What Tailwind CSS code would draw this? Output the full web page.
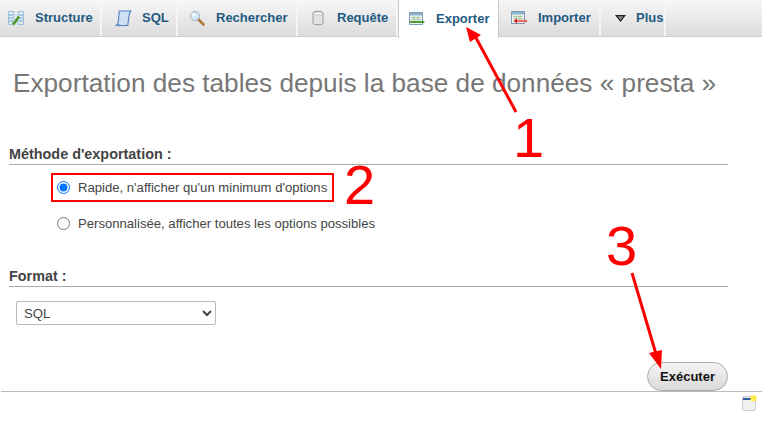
<!DOCTYPE html>
<html lang="fr">
<head>
  <meta charset="UTF-8" />
  <title>Exporter</title>
  <script src="https://cdn.jsdelivr.net/npm/@tailwindcss/browser@4"></script>
</head>
<body class="relative w-[762px] h-[422px] overflow-hidden bg-white text-[#444] font-['Liberation_Sans',Arial,sans-serif]">
  <!-- Tabs -->
  <nav class="flex h-[37px] bg-gradient-to-b from-[#f7f7f7] to-[#dcdcdc] border-b border-[#d0d0d0] text-[13px] font-bold text-[#235a81]">
    <a class="flex items-center w-[102px] pl-[8px] border-r-2 border-[#f5f5f5]">
      <svg class="w-4 h-4 mr-[11px]" viewBox="0 0 16 16"><path d="M.5 1.500h5.500v13H.500zM10 1.500h5.500v13H10z" fill="#dcebf5" stroke="#8fb4cf" stroke-width=".8"/><path d="M1 5h4M1 8h4M1 11h4M11 5h4M11 8h4M11 11h4" stroke="#7aa6c4"/><path d="M4.500 12.500l1.500 1 5-7" fill="none" stroke="#4f9a2c" stroke-width="2.600"/></svg>
      <span>Structure</span>
    </a>
    <a class="flex items-center w-[76px] pl-[13px] border-r-2 border-[#f5f5f5]">
      <svg class="w-[17px] h-[17px] mr-[10px]" viewBox="0 0 16 16"><path d="M4 1h11l-1.500 2.500L12 14.500H1L3 12z" fill="#cfe0f3" stroke="#4f7fc0"/><path d="M1 14.500c1.500-1 3-1 4-.5l-.2 1.200z" fill="#8fb2de" stroke="#4f7fc0" stroke-width=".6"/></svg>
      <span>SQL</span>
    </a>
    <a class="flex items-center w-[120px] pl-[11px] border-r-2 border-[#f5f5f5]">
      <svg class="w-4 h-4 mr-[11px]" viewBox="0 0 16 16"><path d="M9.500 9.500l5 5" stroke="#b5763a" stroke-width="2.600" stroke-linecap="round"/><circle cx="6" cy="6" r="4.600" fill="#d3e6f6" stroke="#9db4c6"/><circle cx="5" cy="5" r="1.600" fill="#fff"/></svg>
      <span>Rechercher</span>
    </a>
    <a class="flex items-center w-[100px] pl-[12px] border-r-2 border-[#f5f5f5]">
      <svg class="w-4 h-4 mr-[11px]" viewBox="0 0 16 16"><path d="M3 3c0-2.400 10-2.400 10 0v10c0 2.400-10 2.400-10 0z" fill="#e2e2e2" stroke="#999"/><ellipse cx="8" cy="3.500" rx="4.500" ry="1.500" fill="#f8f8f8" stroke="#aaa" stroke-width=".6"/></svg>
      <span>Requête</span>
    </a>
    <a class="flex items-center w-[101px] h-[38px] pl-[10px] bg-white border-l border-[#c8c8c8] border-r border-r-[#c8c8c8]">
      <svg class="w-4 h-4 mr-[11px] shrink-0" viewBox="0 0 16 16"><path d="M.5 1.500h13v12H.500z" fill="#eef4f8" stroke="#7d9cb4"/><path d="M1 2h12v2.500H1z" fill="#8fb4cf"/><path d="M2 6.500h10M2 8.500h10M5 5v6M9 5v6" stroke="#9fc08a" stroke-width=".8"/><path d="M1 11h12" stroke="#4e9a33" stroke-width="2"/><path d="M13 9l3 2-3 2z" fill="#4e9a33"/></svg>
      <span>Exporter</span>
    </a>
    <a class="flex items-center w-[102px] pl-[12px] border-r-2 border-[#f5f5f5]">
      <svg class="w-4 h-4 mr-[11px] shrink-0" viewBox="0 0 16 16"><path d="M.5 1.500h13v12H.500z" fill="#eef4f8" stroke="#7d9cb4"/><path d="M1 2h12v2.500H1z" fill="#8fb4cf"/><path d="M2 6.500h10M2 8.500h10M5 5v6M9 5v6" stroke="#9fc08a" stroke-width=".8"/><path d="M6 11h10" stroke="#f06a6a" stroke-width="2.200"/><path d="M6 8.500l-3.500 2.500 3.500 2.500z" fill="#d91c1c"/></svg>
      <span>Importer</span>
    </a>
    <a class="flex items-center w-[65px] pl-[14px] border-r-2 border-[#f5f5f5]">
      <svg class="w-[11px] h-[7px] mr-[10px]" viewBox="0 0 11 7"><path d="M0 0h11L5.500 7z" fill="#222"/><path d="M2.500 1.200h6L5.500 5z" fill="#888"/></svg>
      <span>Plus</span>
    </a>
  </nav>

  <main class="px-[9px]">
    <h2 class="mt-[31px] pl-[4px] text-[26.2px] leading-[30px] font-normal text-[#777] whitespace-nowrap">Exportation des tables depuis la base de données « presta »</h2>

    <h3 class="mt-[48px] text-[14.4px] leading-[17px] font-bold border-b border-[#aaa] pb-[1px] w-[719px]">Méthode d'exportation :</h3>
    <div class="mt-[8px] ml-[42px] w-[283px] h-[29px] border-2 border-[#f00] flex items-center pl-[4px] text-[13.12px] text-[#444]">
      <input type="radio" name="m" checked class="w-[13px] h-[13px] mr-[8px] accent-[#0075ff]" />
      <span>Rapide, n'afficher qu'un minimum d'options</span>
    </div>
    <div class="mt-[7px] ml-[48px] h-[29px] flex items-center text-[13.12px] text-[#444]">
      <input type="radio" name="m" class="w-[13px] h-[13px] mr-[8px]" />
      <span>Personnalisée, afficher toutes les options possibles</span>
    </div>

    <h3 class="mt-[30px] text-[14.4px] leading-[17px] font-bold border-b border-[#aaa] pb-[1px] w-[719px]">Format :</h3>
    <select class="block mt-[14px] ml-[7px] w-[200px] h-[24px] pl-[3px] bg-white border border-[#bbb] rounded-[2px] text-[13.12px] text-[#444]">
      <option>SQL</option>
    </select>

    <div class="flex justify-end w-[719px] mt-[37px]">
      <button class="w-[81px] h-[29px] rounded-full border border-[#aaa] bg-gradient-to-b from-[#f4f4f4] to-[#dadada] text-[13px] font-bold text-[#111]">Exécuter</button>
    </div>
  </main>
  <div class="absolute left-[1px] right-0 top-[391px] border-t border-[#bbb]"></div>

  <!-- Console icon -->
  <svg class="absolute left-[742px] top-[395px] w-[15px] h-[16px]" viewBox="0 0 15 16"><rect x=".5" y="1.500" width="13" height="14" rx="1.500" fill="#f0f0f0" stroke="#ccc"/><path d="M1 3h9v2H1z" fill="#2f5f9f"/><rect x="8.500" y="0.500" width="6" height="5.500" rx="1" fill="#ffe94d"/></svg>

  <!-- Annotations -->
  <svg class="absolute inset-0 pointer-events-none" width="762" height="422" viewBox="0 0 762 422">
    <path d="M516 112L475 36" stroke="#f00" stroke-width="3"/>
    <path d="M466 27l15 8-11 7z" fill="#f00"/>
    <path d="M632 273L656 354" stroke="#f00" stroke-width="3"/>
    <path d="M661 369l-12-16 13-3z" fill="#f00"/>
  </svg>
  <span class="absolute left-[513px] top-[106px] text-[56px] leading-[64px] text-[#f00]">1</span>
  <span class="absolute left-[344px] top-[153px] text-[56px] leading-[64px] text-[#f00]">2</span>
  <span class="absolute left-[606px] top-[214px] text-[56px] leading-[64px] text-[#f00]">3</span>
</body>
</html>
